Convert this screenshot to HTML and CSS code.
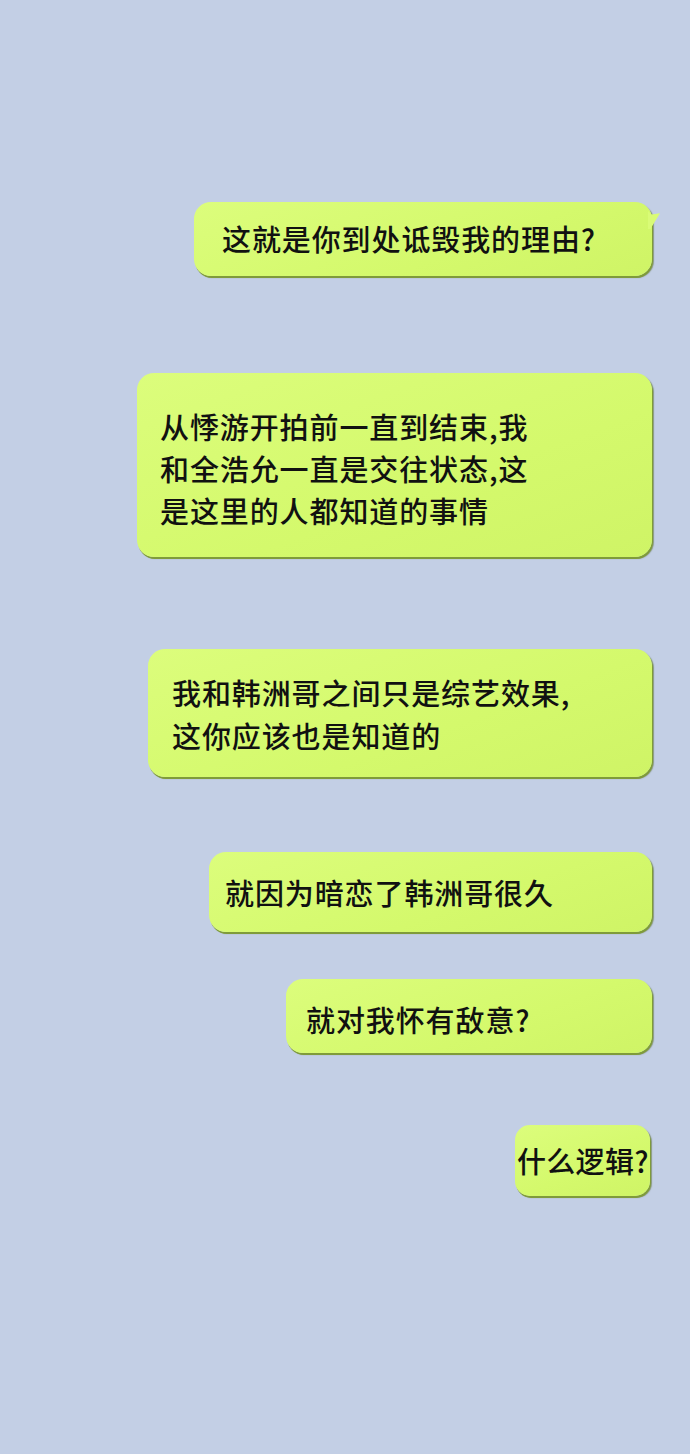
FILE: index.html
```html
<!DOCTYPE html>
<html lang="zh-CN">
<head>
    <meta charset="UTF-8">
    <meta name="viewport" content="width=device-width, initial-scale=1.0">
    <title>聊天记录</title>
    <link rel="stylesheet" href="styles.css">
</head>
<body>
    <section class="chat">
        <div class="bubble bubble-1 has-tail">这就是你到处诋毁我的理由?</div>
        <div class="bubble bubble-2">从悸游开拍前一直到结束,我<br>和全浩允一直是交往状态,这<br>是这里的人都知道的事情</div>
        <div class="bubble bubble-3">我和韩洲哥之间只是综艺效果,<br>这你应该也是知道的</div>
        <div class="bubble bubble-4">就因为暗恋了韩洲哥很久</div>
        <div class="bubble bubble-5">就对我怀有敌意?</div>
        <div class="bubble bubble-6">什么逻辑?</div>
    </section>
</body>
</html>
```

FILE: styles.css
```css
html, body {
    margin: 0;
    padding: 0;
}

body {
    background-color: #c3cfe5;
    font-family: "Noto Sans CJK SC", "Noto Sans", sans-serif;
    min-height: 1454px;
}

.chat {
    display: flex;
    flex-direction: column;
    align-items: flex-end;
    padding: 202px 38px 0 0;
}

.bubble {
    position: relative;
    box-sizing: border-box;
    background: linear-gradient(160deg, #dcfd7c 0%, #d4f96c 60%, #cff466 100%);
    border-radius: 17px;
    box-shadow: 1px 2px 0 #7f9b3a, 2px 2px 1px rgba(80, 100, 30, 0.5);
    color: #111;
    font-size: 29px;
    font-weight: 500;
    line-height: 42px;
    letter-spacing: 0.9px;
    white-space: nowrap;
}

.has-tail::after {
    content: "";
    position: absolute;
    top: 9px;
    right: -8px;
    width: 12px;
    height: 18px;
    background-color: #d9fb76;
    clip-path: polygon(0 0, 30% 20%, 100% 12%, 20% 100%, 0 100%);
}

.bubble-1 {
    width: 458px;
    height: 74px;
    padding: 15px 20px 0 28px;
}

.bubble-2 {
    margin-top: 97px;
    width: 515px;
    height: 184px;
    padding: 32px 20px 0 23px;
}

.bubble-3 {
    margin-top: 92px;
    width: 504px;
    height: 128px;
    padding: 22px 20px 0 24px;
    line-height: 43px;
}

.bubble-4 {
    margin-top: 75px;
    width: 443px;
    height: 80px;
    padding: 19px 20px 0 16px;
}

.bubble-5 {
    margin-top: 47px;
    width: 366px;
    height: 74px;
    padding: 19px 20px 0 20px;
}

.bubble-6 {
    margin-top: 72px;
    margin-right: 2px;
    width: 135px;
    height: 71px;
    padding: 14px 0 0 2px;
    border-radius: 15px;
    letter-spacing: 0.3px;
}
```
